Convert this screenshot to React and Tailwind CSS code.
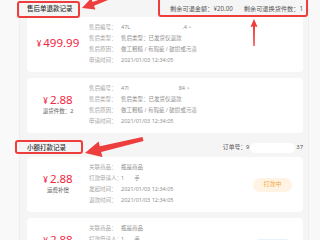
import React from 'react';

const font = "font-['Noto_Sans','Noto_Sans_CJK_SC',sans-serif]";

function Row({ label, children }) {
    return (
        <div className="flex h-[11px] items-center leading-[11px]">
            <span className="w-[32px] shrink-0 whitespace-nowrap text-[#a6a6a6]">{label}</span>
            <span className="whitespace-nowrap text-[#8f8f8f]">{children}</span>
        </div>
    );
}

function Price({ value, sub }) {
    return (
        <div className="flex w-[62px] shrink-0 flex-col items-center justify-center pb-[3px]">
            <div className="flex items-baseline leading-none text-[#f2253e]">
                <span className="text-[8px]">¥</span>
                <span className="ml-[2px] text-[11.5px]">{value}</span>
            </div>
            {sub && <div className="mt-[4px] text-[5.5px] leading-none text-[#666]">{sub}</div>}
        </div>
    );
}

function Card({ price, sub, rows, badge }) {
    return (
        <div className="flex h-[55px] shrink-0 rounded-[4px] bg-white">
            <Price value={price} sub={sub} />
            <div className="flex-1 pt-[5px] text-[5.5px]">
                {rows.map(r => (
                    <Row key={r[0]} label={r[0]}>{r[1]}</Row>
                ))}
            </div>
            {badge}
        </div>
    );
}

function Badge({ text, cls }) {
    return (
        <div className="flex w-[50px] shrink-0 items-center pr-[11px]">
            <span className={`flex h-[14px] w-[40px] items-center justify-center rounded-full text-[6px] ${cls}`}>
                {text}
            </span>
        </div>
    );
}

function Annotations() {
    return (
        <>
            <div className="absolute left-[17px] top-[1px] h-[17px] w-[63px] rounded-[3px] border-2 border-[#ee3d3d]" />
            <div className="absolute left-[158px] top-[-4px] h-[21px] w-[150px] rounded-[3px] border-2 border-[#ee3d3d]" />
            <div className="absolute left-[15px] top-[140px] h-[14px] w-[68px] rounded-[3px] border-2 border-[#ee3d3d]" />
            <svg className="absolute left-0 top-0" width="320" height="240" viewBox="0 0 320 240">
                <polygon fill="#ee3d3d" points="82,8 95.4,9.5 94,5.7 114.5,-2.6 113.5,-5.4 92.6,2 91.2,-1.8" />
                <polygon fill="#ee3d3d" points="254,19 257.5,27 255,26.5 254.7,46 253.3,46 253,26.5 250.5,27" />
                <polygon fill="#ee3d3d" points="85,153 102.4,157 101.2,152.1 143.5,140.9 142.5,137.1 99.8,146.3 98.6,141.4" />
            </svg>
        </>
    );
}

export default function App() {
    const dt = '2021/01/03 12:34:05';
    return (
        <div className={`relative flex h-[240px] w-[320px] overflow-hidden bg-[#f5f5f5] ${font}`}>
            <div className="w-[20px] shrink-0 border-r border-[#eeeeee] bg-[#f9f9f9]" />
            <div className="flex w-[288px] shrink-0 flex-col pl-[7px] pr-[5px]">
                <div className="flex h-[17px] shrink-0 items-center justify-between">
                    <span className="text-[6.5px] font-medium text-[#333]">售后单退款记录</span>
                    <div className="flex gap-[11px] text-[6.2px] text-[#555]">
                        <span>剩余可退金额：¥20.00</span>
                        <span>剩余可退换货件数：1</span>
                    </div>
                </div>
                <Card
                    price="499.99"
                    rows={[
                        ['售后编号：', <>47L<span className="ml-[52px]">.4 &gt;</span></>],
                        ['售后类型：', '售后类型：已发货仅退款'],
                        ['售后原因：', '做工粗糙 / 有瑕疵 / 破损或污渍'],
                        ['申请时间：', dt],
                    ]}
                />
                <div className="h-[6px] shrink-0" />
                <Card
                    price="2.88"
                    sub="退货件数：2"
                    rows={[
                        ['售后编号：', <>47l<span className="ml-[50px]">84 &gt;</span></>],
                        ['售后类型：', '售后类型：已发货仅退款'],
                        ['售后原因：', '做工粗糙 / 有瑕疵 / 破损或污渍'],
                        ['申请时间：', dt],
                    ]}
                />
                <div className="flex h-[24px] shrink-0 items-center justify-between pt-[5px]">
                    <span className="text-[6.5px] font-medium text-[#333]">小额打款记录</span>
                    <div className="flex items-center text-[5.8px] text-[#555]">
                        <span>订单号：9</span>
                        <span className="mx-[1px] h-[10px] w-[45px] rounded-full bg-white" />
                        <span>37</span>
                    </div>
                </div>
                <Card
                    price="2.88"
                    sub="运费补偿"
                    rows={[
                        ['关联商品：', '瓶是商品'],
                        ['打款申请人：', <>1<span className="ml-[10px]">手</span></>],
                        ['发起时间：', dt],
                        ['退款时间：', dt],
                    ]}
                    badge={<Badge text="打款中" cls="bg-[#fff4e3] text-[#f6a53a]" />}
                />
                <div className="h-[6px] shrink-0" />
                <Card
                    price="2.88"
                    sub="运费补偿"
                    rows={[
                        ['关联商品：', '瓶是商品'],
                        ['打款申请人：', <>1<span className="ml-[10px]">手</span></>],
                        ['发起时间：', dt],
                        ['退款时间：', dt],
                    ]}
                    badge={<Badge text="已打款" cls="bg-[#e9f1ff] text-[#4a8af4]" />}
                />
            </div>
            <div className="flex-1 border-l border-[#eeeeee] bg-[#f8f8f8]" />
            <Annotations />
        </div>
    );
}
